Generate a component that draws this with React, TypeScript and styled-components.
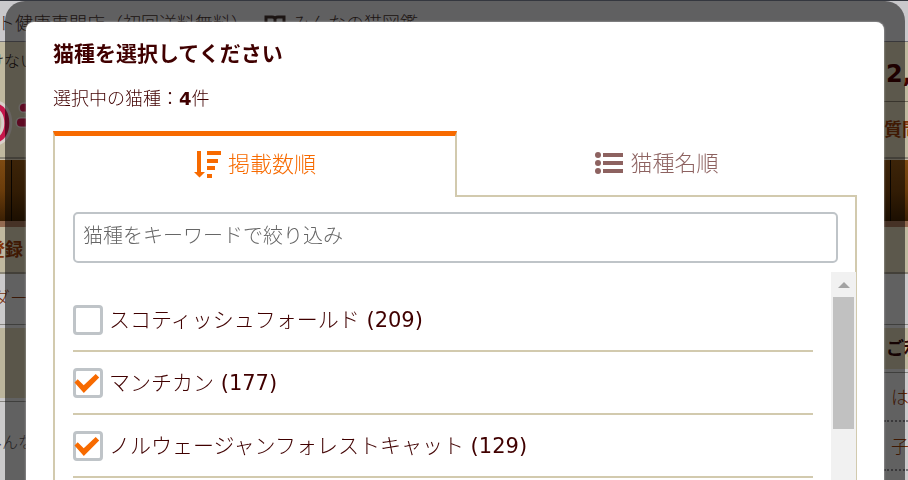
import React, { useState } from "react";
import styled, { createGlobalStyle } from "styled-components";

const GlobalStyle = createGlobalStyle`
  * { box-sizing: border-box; }
  html, body { margin: 0; overflow: hidden; }
  body {
    color: #400000;
    background: #cbcacb;
    font-family: "DejaVu Sans", "Noto Sans CJK JP", sans-serif;
    font-size: 18px;
    font-weight: 300;
    line-height: 24px;
  }
  button, input { font: inherit; color: inherit; margin: 0; }
  strong { font-weight: 700; }
`;

/* ---------- page behind the dialog ---------- */

const Page = styled.div`
  min-height: 100vh;
  overflow: hidden;
  white-space: nowrap;
`;

const TopBar = styled.div`
  display: flex;
  align-items: center;
  height: 42px;
  border-top: 1px solid #34373f;
  border-bottom: 1px solid #77767c;
  background: #c9c8cb;
  color: #3c2c28;
`;

const TopLink = styled.span<{ $start?: boolean }>`
  display: flex;
  align-items: center;
  gap: 6px;
  margin-left: ${(p) => (p.$start ? "-3px" : "15px")};
  padding-top: 5px;
`;

const Band = styled.div<{ $height: number }>`
  display: flex;
  justify-content: space-between;
  height: ${(p) => p.$height}px;
  background: #c0b99f;
  border-bottom: 2px solid #8c8778;
`;

const Edge = styled.div<{ $right?: boolean }>`
  display: flex;
  flex-direction: column;
  width: ${(p) => (p.$right ? 24 : 26)}px;
  align-items: ${(p) => (p.$right ? "flex-start" : "flex-end")};
`;

const Tagline = styled.span`
  font-size: 16px;
  line-height: 40px;
  margin-right: -10px;
  color: #1c1010;
`;

const Price = styled.strong`
  width: 100%;
  height: 60px;
  padding-left: 2px;
  font-size: 24px;
  line-height: 64px;
  border-bottom: 1px solid #77705e;
`;

const Strong = styled.strong`
  color: #843508;
  line-height: 46px;
  margin-right: 3px;
`;

const Question = styled(Strong)`
  line-height: 56px;
  margin: 0;
`;

const Nav = styled.div`
  display: flex;
  justify-content: space-between;
  height: 68px;
  border-top: 1px solid #c7bda8;
  border-bottom: 6px solid #926a50;
  background: linear-gradient(#7e4b12, #6a3c0b 50%, #3b2004);
`;

const NavItem = styled.div<{ $right?: boolean }>`
  width: ${(p) => (p.$right ? 18 : 12)}px;
  border-${(p) => (p.$right ? "left" : "right")}: 1px solid #140a02;
`;

const Columns = styled.div`
  display: flex;
  justify-content: space-between;
`;

const Column = styled(Edge)`
  color: #7a3210;
`;

const Crumb = styled.div`
  height: 50px;
  line-height: 50px;
  align-self: stretch;
  display: flex;
  justify-content: flex-end;
  margin-right: -2px;
`;

const Strip = styled.div<{ $height: number }>`
  align-self: stretch;
  height: ${(p) => p.$height}px;
  line-height: ${(p) => p.$height - 2}px;
  padding-left: 2px;
  border: solid #85847f;
  border-width: 1px 0;
  background: #bcb59c;
  box-shadow: inset 0 3px #cbcacb, inset 0 -3px #cbcacb;
  color: #2c0606;
  font-weight: bold;
`;

const SideText = styled.span`
  font-size: 16px;
  line-height: 82px;
  margin-right: -8px;
  color: #50484a;
`;

const SideLink = styled.a`
  align-self: stretch;
  height: 49px;
  line-height: 49px;
  padding-left: 7px;
  border-bottom: 2px dotted #77767a;
  color: #843508;
  text-decoration: none;
`;

/* ---------- dialog ---------- */

const Shade = styled.div`
  position: fixed;
  inset: 1px 3px 0 5px;
  padding: 21px 21px 0;
  overflow: hidden;
  border-radius: 20px 20px 0 0;
  background: rgba(0, 0, 0, 0.52);
`;

const Dialog = styled.section`
  min-height: 100%;
  padding: 18px 27px 0;
  border-radius: 8px 8px 0 0;
  background: #fff;
  box-shadow: 0 0 2px #ccc;
`;

const Title = styled.h1`
  margin: 0;
  font-size: 21px;
  line-height: 28px;
`;

const Count = styled.p`
  margin: 19px 0 20px;
  line-height: 24px;
`;

const Tabs = styled.div`
  display: flex;
`;

const Tab = styled.button<{ $active: boolean }>`
  box-sizing: content-box;
  flex: 1 1 0;
  display: flex;
  align-items: center;
  justify-content: center;
  gap: 7px;
  height: ${(p) => (p.$active ? 55 : 64)}px;
  padding: 0 0 ${(p) => (p.$active ? 6 : 0)}px;
  border: 0 solid #d2caae;
  border-width: ${(p) => (p.$active ? "5px 2px 0" : "0 0 2px")};
  border-top-color: #f76a00;
  background: none;
  color: ${(p) => (p.$active ? "#f76a00" : "#8d6260")};
  font-size: 22px;
  line-height: 28px;
  cursor: pointer;
`;

const TabLabel = styled.span`
  padding-top: 2px;
`;

const Panel = styled.div`
  padding: 15px 17px 0 18px;
  border: solid #d2caae;
  border-width: 0 2px;
`;

const Search = styled.input`
  display: block;
  width: 100%;
  height: 51px;
  padding: 0 8px 3px;
  border: 2px solid #bfc4c8;
  border-radius: 5px;
  background: #fff;
  font-size: 20px;
  outline: 0;
  &::placeholder { color: #666; opacity: 1; }
`;

const Scroller = styled.div`
  display: flex;
  gap: 18px;
  margin: 9px -18px 0 0;
`;

const List = styled.ul`
  flex: 1;
  margin: 0;
  padding: 17px 0 24px;
  list-style: none;
`;

const Row = styled.li`
  border-bottom: 2px solid #d2caae;
`;

const Option = styled.label`
  display: flex;
  align-items: center;
  gap: 6px;
  height: 61px;
  font-size: 21px;
  line-height: 30px;
`;

const BreedCount = styled.span`
  font-weight: 400;
`;

const Box = styled.span`
  display: grid;
  width: 30px;
  height: 30px;
  & > * { grid-area: 1 / 1; }
  svg { pointer-events: none; z-index: 1; }
`;

const Tick = styled.input`
  appearance: none;
  width: 30px;
  height: 30px;
  border: 3px solid #bfc4c8;
  border-radius: 4px;
  background: #fff;
`;

const Track = styled.div`
  display: flex;
  flex-direction: column;
  align-items: center;
  width: 25px;
  background: #f1f1f1;
`;

const Arrow = styled.div`
  height: 25px;
  padding-top: 10px;
  &::before {
    content: "";
    display: block;
    border: solid transparent;
    border-width: 0 6px 6px;
    border-bottom-color: #a3a3a3;
  }
`;

const Thumb = styled.div`
  width: 21px;
  height: 132px;
  background: #c1c1c1;
`;

const Logo = () => (
  <svg width="26" height="76" viewBox="0 0 26 76" fill="none" aria-hidden="true">
    <g stroke="#d8cfca" strokeWidth="11" strokeLinecap="round">
      <path d="M-6 24C11 24 11 59 -6 59" />
      <path d="M24 26h6M21 41h9" />
    </g>
    <g stroke="#c5164a" strokeWidth="5" strokeLinecap="round">
      <path d="M-6 24C11 24 11 59 -6 59" />
      <path d="M24 26h6M21 41h9" strokeWidth="8" />
    </g>
  </svg>
);

const BookIcon = () => (
  <svg width="22" height="18" viewBox="0 0 22 18" fill="none" stroke="#3c2c28" strokeWidth="3" aria-hidden="true">
    <path d="M2 2h6q3 0 3 2 0-2 3-2h6v12h-6q-3 0-3 2 0-2-3-2H2zM11 4v12" />
  </svg>
);

const SortIcon = () => (
  <svg width="27" height="28" viewBox="0 0 27 28" fill="currentColor" aria-hidden="true">
    <path d="M3 1h4v21h4l-5.500 5.500L0 22h3zM13 1h14v4H13zM13 9h11v4H13zM13 16h8v4h-8zM13 24h5v4h-5z" />
  </svg>
);

const ListIcon = () => (
  <svg width="28" height="22" viewBox="0 0 28 22" fill="currentColor" aria-hidden="true">
    <circle cx="3" cy="3" r="3" />
    <circle cx="3" cy="11" r="3" />
    <circle cx="3" cy="19" r="3" />
    <path d="M8 1h20v4H8zM8 9h20v4H8zM8 17h20v4H8z" />
  </svg>
);

const CheckMark = () => (
  <svg width="30" height="30" viewBox="0 0 30 30" fill="#f76a00" aria-hidden="true">
    <path d="M1.500 14.500l3.200-3.200 6 5.900L22.700 6.100l3.500 3.400-15.400 15.400z" />
  </svg>
);

const breeds = [
  { name: "スコティッシュフォールド", count: 209 },
  { name: "マンチカン", count: 177 },
  { name: "ノルウェージャンフォレストキャット", count: 129 },
];

export default function App() {
  const [tab, setTab] = useState(0);
  const [picked, setPicked] = useState([false, true, true]);

  return (
    <>
      <GlobalStyle />
      <Page aria-hidden="true">
        <TopBar>
          <TopLink $start>ト健康専門店（初回送料無料）</TopLink>
          <TopLink><BookIcon />みんなの猫図鑑</TopLink>
        </TopBar>
        <Band $height={117}>
          <Edge>
            <Tagline>けない</Tagline>
            <Logo />
          </Edge>
          <Edge $right>
            <Price>2,</Price>
            <Question>質問</Question>
          </Edge>
        </Band>
        <Nav>
          <NavItem />
          <NavItem $right />
        </Nav>
        <Band $height={47}>
          <Edge><Strong>登録</Strong></Edge>
        </Band>
        <Columns>
          <Column>
            <Crumb>ダー</Crumb>
            <Strip $height={78} />
            <SideText>みんな</SideText>
          </Column>
          <Column $right>
            <Crumb />
            <Strip $height={49}>ご利</Strip>
            <SideLink href="#first">は</SideLink>
            <SideLink href="#kitten">子</SideLink>
          </Column>
        </Columns>
      </Page>

      <Shade>
        <Dialog role="dialog" aria-labelledby="dialog-title">
          <Title id="dialog-title">猫種を選択してください</Title>
          <Count>選択中の猫種：<strong>4</strong>件</Count>
          <Tabs role="tablist">
            <Tab role="tab" aria-selected={tab === 0} $active={tab === 0} onClick={() => setTab(0)}>
              <SortIcon />
              <TabLabel>掲載数順</TabLabel>
            </Tab>
            <Tab role="tab" aria-selected={tab === 1} $active={tab === 1} onClick={() => setTab(1)}>
              <ListIcon />
              <TabLabel>猫種名順</TabLabel>
            </Tab>
          </Tabs>
          <Panel role="tabpanel">
            <Search type="text" aria-label="猫種をキーワードで絞り込み" placeholder="猫種をキーワードで絞り込み" />
            <Scroller>
              <List>
                {breeds.map((b, i) => (
                  <Row key={b.name}>
                    <Option>
                      <Box>
                        <Tick
                          type="checkbox"
                          checked={picked[i]}
                          onChange={() => setPicked(picked.map((v, n) => (n === i ? !v : v)))}
                        />
                        {picked[i] && <CheckMark />}
                      </Box>
                      <span>{b.name} <BreedCount>({b.count})</BreedCount></span>
                    </Option>
                  </Row>
                ))}
              </List>
              <Track>
                <Arrow />
                <Thumb />
              </Track>
            </Scroller>
          </Panel>
        </Dialog>
      </Shade>
    </>
  );
}
